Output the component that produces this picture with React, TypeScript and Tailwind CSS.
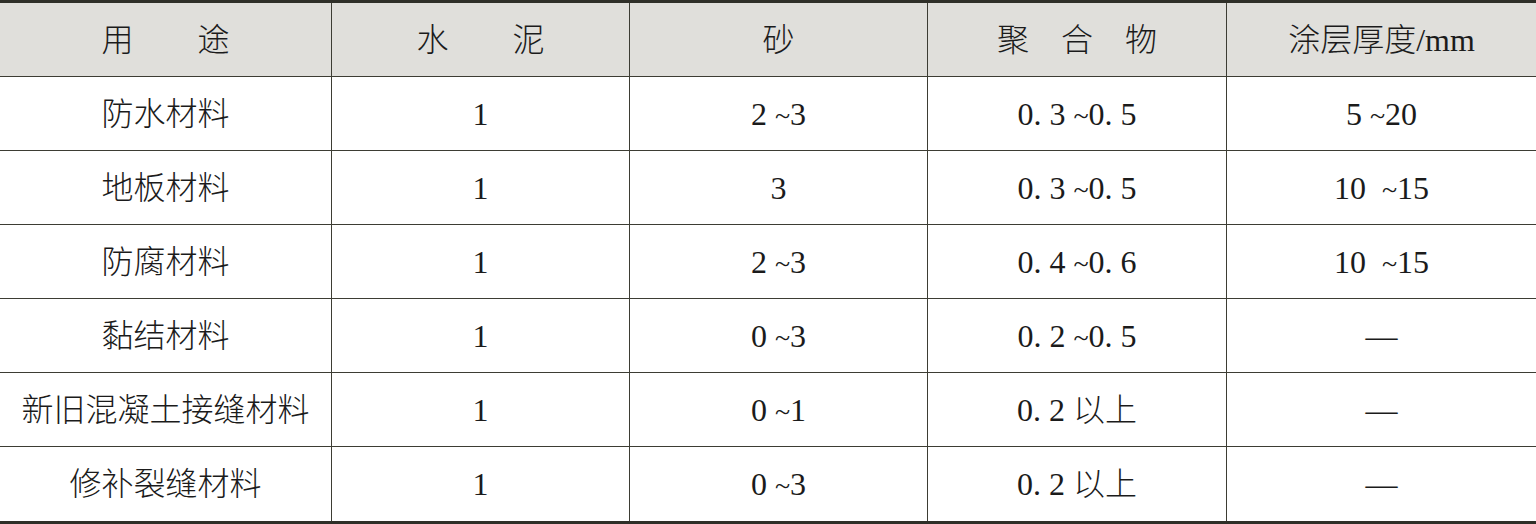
const rows = [
  ["防水材料", "1", "2 ~3", "0. 3 ~0. 5", "5 ~20"],
  ["地板材料", "1", "3", "0. 3 ~0. 5", "10  ~15"],
  ["防腐材料", "1", "2 ~3", "0. 4 ~0. 6", "10  ~15"],
  ["黏结材料", "1", "0 ~3", "0. 2 ~0. 5", "—"],
  ["新旧混凝土接缝材料", "1", "0 ~1", "0. 2 以上", "—"],
  ["修补裂缝材料", "1", "0 ~3", "0. 2 以上", "—"],
];

const head = ["用\u3000\u3000途", "水\u3000\u3000泥", "砂", "聚\u3000合\u3000物", "涂层厚度/mm"];

const grid = "grid grid-cols-[332px_298px_298px_299px_1fr]";
const cell = "flex items-center justify-center border-r border-[#3d3d34] last:border-r-0";

// the tilde in the source is a bit smaller than the digits
function Val({ text }: { text: string }) {
  const i = text.indexOf("~");
  if (i < 0) return <span className="whitespace-pre">{text}</span>;
  return (
    <span className="whitespace-pre">
      {text.slice(0, i)}
      <span className="text-[28px]">~</span>
      {text.slice(i + 1)}
    </span>
  );
}

export default function App() {
  return (
    <div
      className="w-[1536px] h-[524px] bg-white text-[32px] leading-none font-light text-[#1b1b1b] border-t-[3px] border-b-[3px] border-[#2f2f28]"
      style={{ fontFamily: '"Liberation Serif", "Noto Sans CJK SC", serif' }}
    >
      <div className={`${grid} h-[74px] bg-[#e0dfdb] border-b border-[#3d3d34]`}>
        {head.map((h, i) => (
          <div key={i} className={cell}>
            <span className="whitespace-pre">{h}</span>
          </div>
        ))}
      </div>
      {rows.map((r, i) => (
        <div key={i} className={`${grid} h-[74px] ${i < rows.length - 1 ? "border-b border-[#3d3d34]" : ""}`}>
          {r.map((c, j) => (
            <div key={j} className={cell}>
              <Val text={c} />
            </div>
          ))}
        </div>
      ))}
    </div>
  );
}
